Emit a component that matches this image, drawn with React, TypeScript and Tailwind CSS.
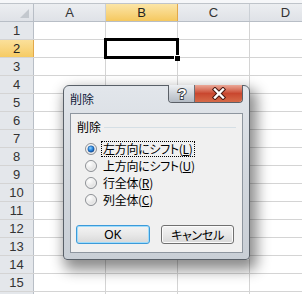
import React from 'react'

const cols = ['A', 'B', 'C', 'D']
const rows = Array.from({ length: 16 }, (_, i) => i + 1)

const jp = "font-['Noto_Sans_CJK_JP','Noto_Sans',sans-serif] [font-feature-settings:'palt']"

function Radio({ checked }: { checked?: boolean }) {
  return (
    <svg width="12" height="12" viewBox="0 0 12 12" className="shrink-0">
      <defs>
        <radialGradient id="rg" cx="0.35" cy="0.3" r="0.8">
          <stop offset="0" stopColor="#ffffff" />
          <stop offset="0.6" stopColor="#e6e6e6" />
          <stop offset="1" stopColor="#cfcfcf" />
        </radialGradient>
        <radialGradient id="dot" cx="0.4" cy="0.35" r="0.75">
          <stop offset="0" stopColor="#8fd3ff" />
          <stop offset="0.5" stopColor="#2a86dd" />
          <stop offset="1" stopColor="#0a3f8f" />
        </radialGradient>
      </defs>
      <circle cx="6" cy="6" r="5.5" fill="url(#rg)" stroke="#8d9095" strokeWidth="1" />
      <circle cx="6" cy="6" r="4.2" fill="none" stroke="#f4f4f4" strokeWidth="0.8" />
      {checked && <circle cx="6" cy="6" r="3.2" fill="url(#dot)" stroke="#1b4f8f" strokeWidth="0.5" />}
    </svg>
  )
}

const options = [
  { label: '左方向にシフト(', key: 'L', checked: true },
  { label: '上方向にシフト(', key: 'U' },
  { label: '行全体(', key: 'R' },
  { label: '列全体(', key: 'C' },
]

function DeleteDialog() {
  return (
    <div className="absolute left-[63px] top-[85px] w-[187px] h-[175px] flex flex-col px-[6px] pb-[6px] border border-[#596068] rounded-t-[6px] rounded-b-[4px] bg-gradient-to-b from-[#e2e6eb] via-[#d3d8de] to-[#c9cfd6] shadow-[4px_7px_14px_3px_rgba(0,0,0,0.45)]">
      {/* title bar */}
      <div className="h-[27px] flex items-start justify-between">
        <span className={`mt-[6px] text-[12px] leading-[14px] text-[#10203a] ${jp}`}>削除</span>
        <div className="flex -mt-[1px] h-[18px] border border-t-0 border-[#5b6067] rounded-b-[4px] overflow-hidden">
          <div className="w-[26px] flex items-center justify-center bg-gradient-to-b from-[#eef0f3] via-[#cfd4da] to-[#b4bbc4] border-r border-[#6a7078]">
            <svg width="12" height="16" viewBox="0 0 12 16">
              <text x="6" y="13" textAnchor="middle" fontSize="15" fontWeight="bold" fontFamily="Liberation Sans, sans-serif" fill="#ffffff" stroke="#3a3f46" strokeWidth="1.8" paintOrder="stroke">?</text>
            </svg>
          </div>
          <div className="w-[47px] flex items-center justify-center bg-gradient-to-b from-[#eaa898] via-[#c9472f] to-[#d66a48]">
            <svg width="16" height="13" viewBox="0 0 16 13">
              <path d="M4 2.5 L12 10.5 M12 2.5 L4 10.5" stroke="#4a1a12" strokeWidth="4.4" strokeLinecap="square" />
              <path d="M4 2.5 L12 10.5 M12 2.5 L4 10.5" stroke="#ffffff" strokeWidth="2.4" strokeLinecap="square" />
            </svg>
          </div>
        </div>
      </div>

      {/* client */}
      <div className={`flex-1 flex flex-col border border-[#8e969f] bg-[#f0f0f0] text-[12px] text-black ${jp}`}>
        <div className="mt-[6px] ml-[6px] mr-[6px] flex items-center gap-[3px] h-[14px]">
          <span className="leading-[14px]">削除</span>
          <div className="flex-1 h-px bg-[#d5dfe5]" />
        </div>

        <div className="mt-[6px] flex flex-col">
          {options.map((o) => (
            <div key={o.key} className="h-[17px] flex items-center pl-[14px] gap-[4px]">
              <Radio checked={o.checked} />
              <span
                className={`leading-[14px] px-[1px] tracking-[-0.3px] border ${o.checked ? 'border-dotted border-black' : 'border-transparent'}`}
              >
                {o.label}
                <span className="underline underline-offset-1">{o.key}</span>)
              </span>
            </div>
          ))}
        </div>

        <div className="mt-auto mb-[8px] ml-[5px] flex gap-[11px]">
          <button className="w-[74px] h-[19px] rounded-[3px] border border-[#3c9ad9] shadow-[inset_0_0_0_1px_#9fdcfb] bg-gradient-to-b from-[#f3f3f3] via-[#e8e8e8] to-[#d8d8d8] text-[12px] leading-[16px] font-['Liberation_Sans',sans-serif]">
            OK
          </button>
          <button className="w-[73px] h-[19px] rounded-[3px] border border-[#707070] shadow-[inset_0_0_0_1px_#fbfbfb] bg-gradient-to-b from-[#f3f3f3] via-[#e8e8e8] to-[#d8d8d8] text-[12px] leading-[16px] tracking-[-0.3px]">
            キャンセル
          </button>
        </div>
      </div>
    </div>
  )
}

export default function App() {
  return (
    <div className="relative w-[302px] h-[294px] overflow-hidden bg-white font-['Liberation_Sans',sans-serif]">
      <div className="h-[4px] bg-[#f6f7f9] border-b border-[#bfc4ca]" />

      {/* column header */}
      <div className="flex h-[18px] border-b border-[#b8bec6] bg-gradient-to-b from-[#eceef1] to-[#dfe2e7]">
        <div className="w-[34px] shrink-0 border-r border-[#b8bec6] flex items-end justify-end pr-[4px] pb-[3px]">
          <div className="w-0 h-0 border-l-[9px] border-l-transparent border-b-[9px] border-b-[#c3c8ce]" />
        </div>
        {cols.map((c) => (
          <div
            key={c}
            className={`w-[72px] shrink-0 border-r flex items-center justify-center text-[13px] ${
              c === 'B'
                ? 'bg-gradient-to-b from-[#fbe5a6] to-[#f5c85e] border-[#e2a84a] text-[#222]'
                : 'border-[#cbd0d6] text-[#333]'
            }`}
          >
            {c}
          </div>
        ))}
      </div>

      {/* rows (the 16th is only a sliver at the bottom edge) */}
      {rows.map((r) => (
        <div key={r} className="flex h-[18px] border-b border-[#d4d4d4]">
          <div
            className={`w-[34px] shrink-0 border-r flex items-center justify-center text-[13px] ${
              r === 2
                ? 'bg-gradient-to-b from-[#fbe09a] to-[#f6cb63] border-[#e2a84a] text-[#222]'
                : 'bg-[#e4e7eb] border-[#b8bec6] text-[#333]'
            }`}
          >
            {r < 16 ? r : ''}
          </div>
          {cols.map((c) => (
            <div key={c} className="w-[72px] shrink-0 border-r border-[#d4d4d4]" />
          ))}
        </div>
      ))}

      {/* active cell */}
      <div className="absolute left-[104px] top-[38px] w-[75px] h-[21px] border-[3px] border-black" />
      <div className="absolute left-[174px] top-[55px] w-[6px] h-[6px] bg-black border-l border-t border-white" />

      <DeleteDialog />
    </div>
  )
}
